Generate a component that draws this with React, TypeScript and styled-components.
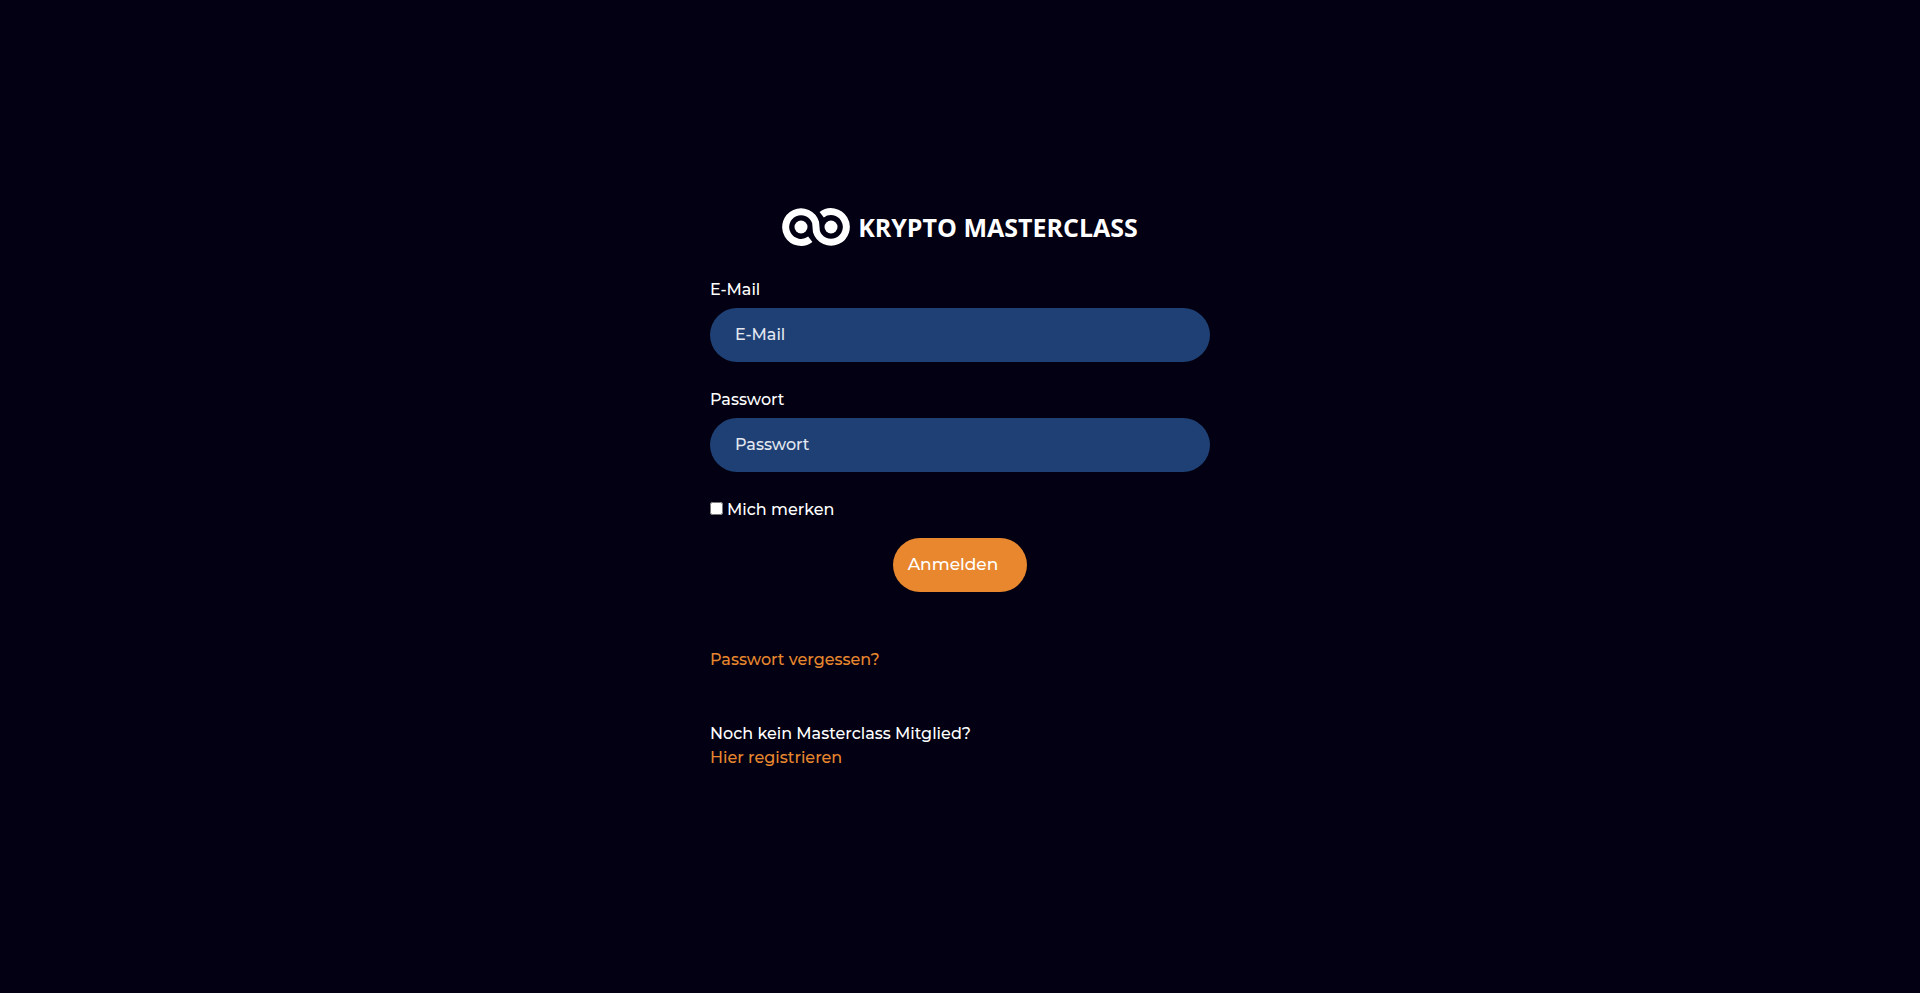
import React from 'react';
import styled, { createGlobalStyle } from 'styled-components';

const Global = createGlobalStyle`
  *, *::before, *::after { box-sizing: border-box; }
  body {
    margin: 0;
    background: #020012;
    color: #fff;
    font: 500 16px/24px Montserrat, Inter, "Open Sans", sans-serif;
  }
`;

const Page = styled.main`
  min-height: 100vh;
  display: flex;
  justify-content: center;
  align-items: center;
  padding-bottom: 16px;
`;

const Panel = styled.div`
  width: 100%;
  max-width: 500px;
  display: flex;
  flex-direction: column;
`;

const Brand = styled.header`
  display: flex;
  align-items: center;
  justify-content: center;
  gap: 8px;
  margin-bottom: 32px;
`;

const BrandName = styled.span`
  font: 660 25px/32px "Open Sans", "Noto Sans", sans-serif;
  white-space: nowrap;
`;

const LoginForm = styled.form`
  display: flex;
  flex-direction: column;
`;

const Field = styled.div`
  display: flex;
  flex-direction: column;
  gap: 6px;
  margin-bottom: 26px;
`;

const TextInput = styled.input`
  width: 100%;
  height: 54px;
  padding: 0 25px;
  border: 0;
  border-radius: 27px;
  background: #1f4075;
  color: #fff;
  font: inherit;
  &::placeholder { color: #e3e8f0; opacity: 1; }
`;

const Remember = styled.label`
  display: flex;
  align-items: baseline;
  gap: 4px;
`;

const Tick = styled.input`
  width: 13px;
  height: 13px;
  margin: 0;
`;

const Submit = styled.button`
  align-self: center;
  height: 54px;
  margin-top: 16px;
  padding: 0 29px 2px 15px;
  border: 0;
  border-radius: 27px;
  background: #e8872e;
  color: #fff;
  font: inherit;
  font-size: 17px;
`;

const Line = styled.p`
  margin: 0;
`;

const Links = styled.div`
  display: flex;
  flex-direction: column;
  gap: 50px;
  margin-top: 56px;
`;

const Anchor = styled.a`
  color: #e8872e;
  text-decoration: none;
`;

function Logo() {
  return (
    <svg width="68" height="38" viewBox="0 0 68 38" fill="none" aria-hidden="true">
      <path
        d="M28.3 31.2A15.3 15.3 0 1 1 33.6 14.5L34.4 23.5A15.3 15.3 0 1 0 39.7 6.8"
        stroke="#fff"
        strokeWidth="7"
        strokeLinejoin="round"
      />
      <circle cx="19" cy="19" r="6.5" fill="#fff" />
      <circle cx="49" cy="19" r="6.5" fill="#fff" />
    </svg>
  );
}

export default function App() {
  return (
    <Page>
      <Global />
      <Panel>
        <Brand>
          <Logo />
          <BrandName>KRYPTO MASTERCLASS</BrandName>
        </Brand>
        <LoginForm>
          <Field>
            <label htmlFor="email">E-Mail</label>
            <TextInput id="email" type="email" placeholder="E-Mail" />
          </Field>
          <Field>
            <label htmlFor="password">Passwort</label>
            <TextInput id="password" type="password" placeholder="Passwort" />
          </Field>
          <Remember><Tick type="checkbox" /> Mich merken</Remember>
          <Submit type="button">Anmelden</Submit>
        </LoginForm>
        <Links>
          <Line><Anchor href="#reset">Passwort vergessen?</Anchor></Line>
          <Line>Noch kein Masterclass Mitglied?<br /><Anchor href="#register">Hier registrieren</Anchor></Line>
        </Links>
      </Panel>
    </Page>
  );
}
